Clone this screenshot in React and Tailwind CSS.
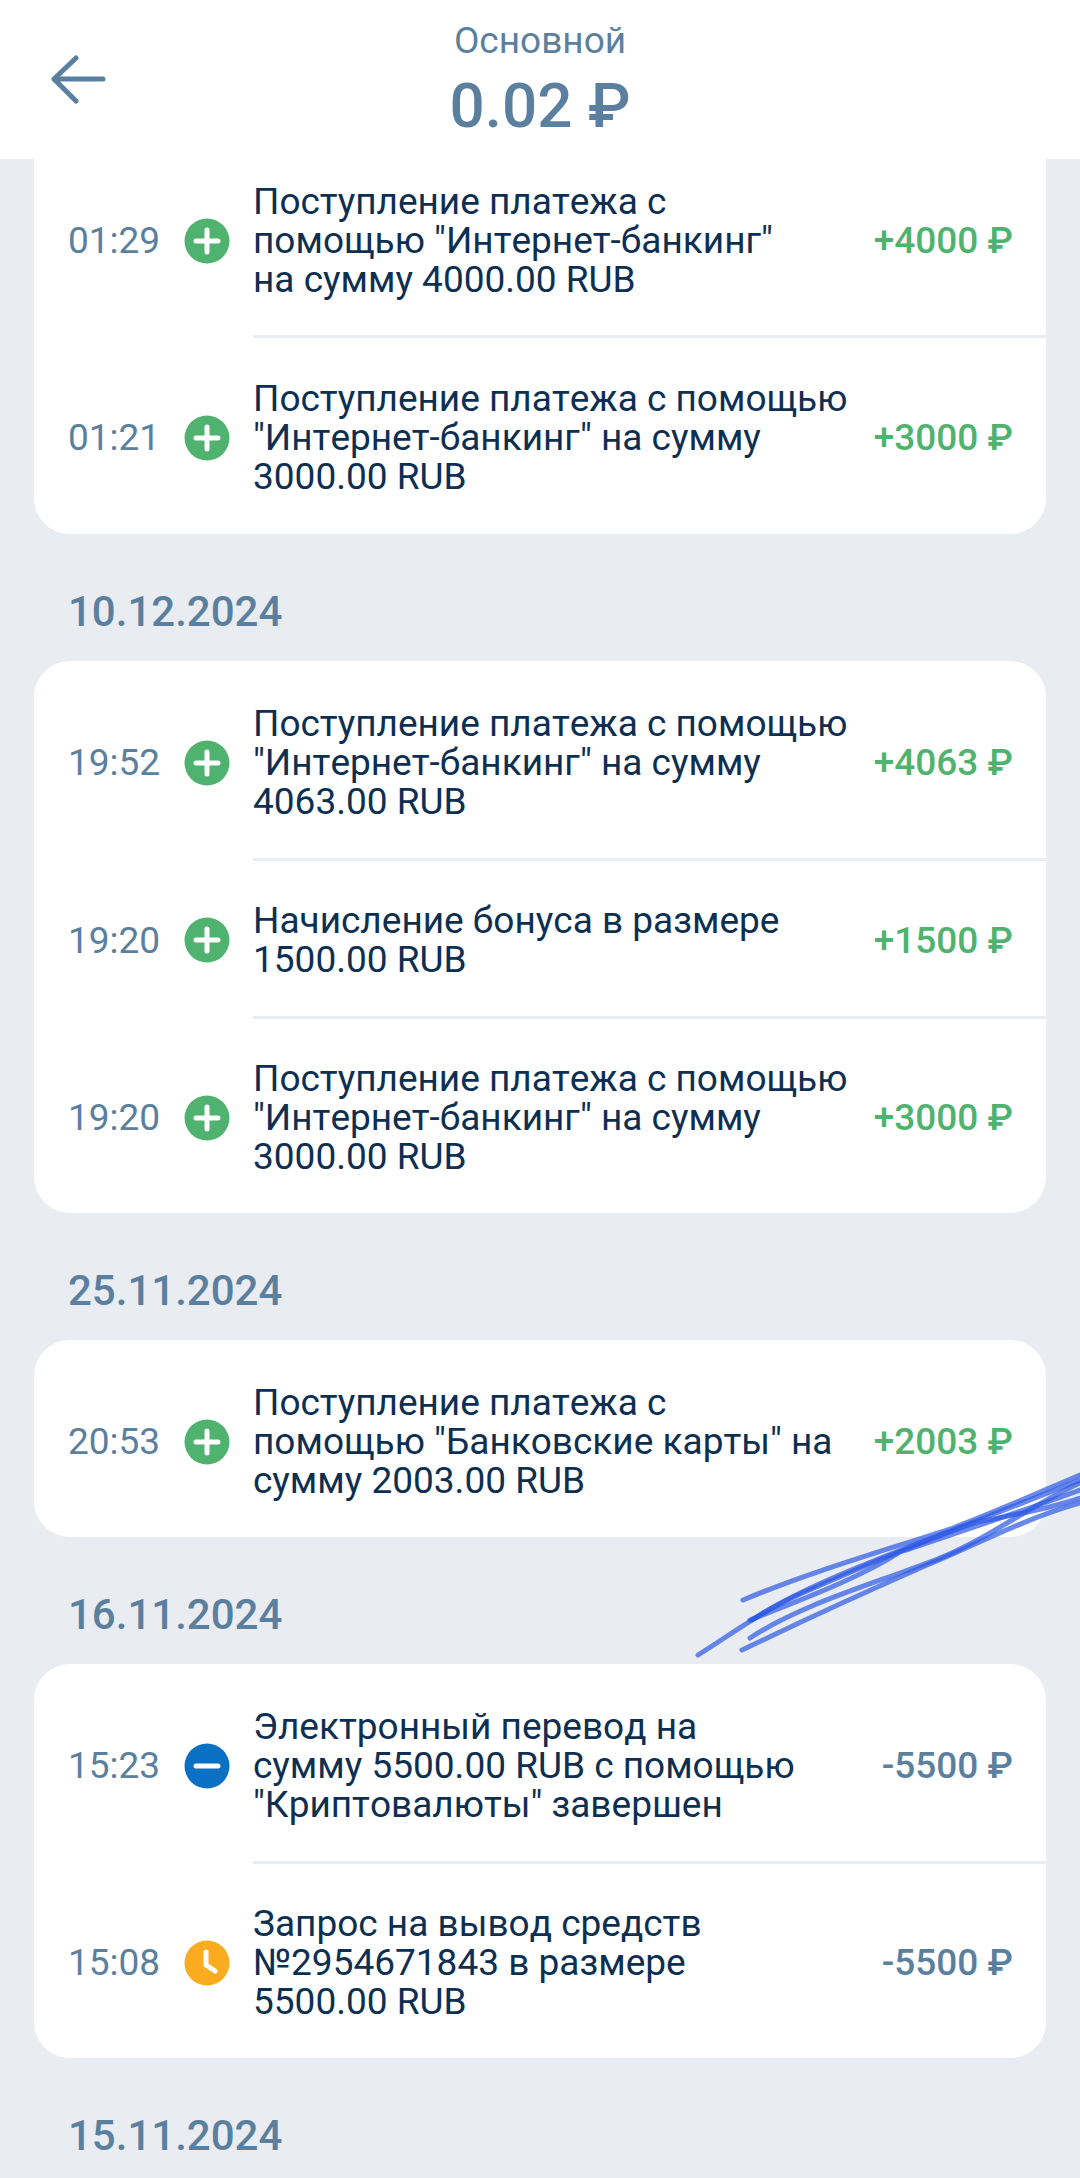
const PLUS = 'plus';
const MINUS = 'minus';
const WAIT = 'wait';

const groups = [
  {
    date: null,
    rows: [
      { time: '01:29', icon: PLUS, amount: '+4000 ₽', lines: ['Поступление платежа с', 'помощью "Интернет-банкинг"', 'на сумму 4000.00 RUB'] },
      { time: '01:21', icon: PLUS, amount: '+3000 ₽', lines: ['Поступление платежа с помощью', '"Интернет-банкинг" на сумму', '3000.00 RUB'] },
    ],
  },
  {
    date: '10.12.2024',
    rows: [
      { time: '19:52', icon: PLUS, amount: '+4063 ₽', lines: ['Поступление платежа с помощью', '"Интернет-банкинг" на сумму', '4063.00 RUB'] },
      { time: '19:20', icon: PLUS, amount: '+1500 ₽', lines: ['Начисление бонуса в размере', '1500.00 RUB'] },
      { time: '19:20', icon: PLUS, amount: '+3000 ₽', lines: ['Поступление платежа с помощью', '"Интернет-банкинг" на сумму', '3000.00 RUB'] },
    ],
  },
  {
    date: '25.11.2024',
    rows: [
      { time: '20:53', icon: PLUS, amount: '+2003 ₽', lines: ['Поступление платежа с', 'помощью "Банковские карты" на', 'сумму 2003.00 RUB'] },
    ],
  },
  {
    date: '16.11.2024',
    rows: [
      { time: '15:23', icon: MINUS, amount: '-5500 ₽', lines: ['Электронный перевод на', 'сумму 5500.00 RUB с помощью', '"Криптовалюты" завершен'] },
      { time: '15:08', icon: WAIT, amount: '-5500 ₽', lines: ['Запрос на вывод средств', '№2954671843 в размере', '5500.00 RUB'] },
    ],
  },
];

function StatusIcon({ type }) {
  const fill = type === PLUS ? '#4fb36f' : type === MINUS ? '#0a70c4' : '#fbab1f';
  return (
    <svg width="46" height="46" viewBox="0 0 46 46" className="shrink-0">
      <circle cx="23" cy="23" r="22.5" fill={fill} />
      {type === PLUS && <path d="M23 12v22M12 23h22" stroke="#fff" strokeWidth="5" strokeLinecap="round" />}
      {type === MINUS && <path d="M12 23h22" stroke="#fff" strokeWidth="5" strokeLinecap="round" />}
      {type === WAIT && <path d="M22 12v13l9 6" stroke="#fff" strokeWidth="5" strokeLinecap="round" strokeLinejoin="round" fill="none" />}
    </svg>
  );
}

function Row({ row, first, cut }) {
  const green = row.icon === PLUS;
  // the first card is scrolled under the header, so its two rows differ a little
  const pad = cut === 0 ? 'pt-[20px] pb-[36px]' : cut === 1 ? 'pt-[41px] pb-[38px]' : 'pt-[40px] pb-[37px]';
  return (
    <div className="flex">
      <div className={`w-[219px] shrink-0 flex items-center pl-[34px] ${cut === 0 ? 'pb-[13px]' : 'pt-[6px]'}`}>
        <span className="w-[116px] text-[37px] leading-none text-[#5b7f9e]">{row.time}</span>
        <StatusIcon type={row.icon} />
      </div>
      <div className={`flex-1 flex items-center justify-between pr-[33px] border-t-[3px] ${pad} ${first ? 'border-transparent' : 'border-[#e9edf2]'}`}>
        <div className="text-[37px] leading-[39px] text-[#0d2f52] whitespace-nowrap [font-kerning:none]">
          {row.lines.map((line) => (
            <div key={line}>{line}</div>
          ))}
        </div>
        <span className={`text-[37px] leading-none font-medium whitespace-nowrap ${green ? 'text-[#4fb36f]' : 'text-[#5b7f9e]'}`}>
          {row.amount}
        </span>
      </div>
    </div>
  );
}

function Scribble() {
  // pen marks over the screenshot
  const strokes = [
    'M743 1600 C810 1572 880 1552 953 1528 C1000 1510 1040 1492 1080 1475',
    'M752 1620 C800 1588 880 1558 953 1530 C1000 1512 1040 1496 1080 1480',
    'M698 1655 C730 1635 760 1612 800 1594 C860 1568 920 1542 977 1522 C1020 1514 1050 1508 1080 1498',
    'M750 1638 C800 1605 870 1585 927 1563 C980 1545 1030 1505 1080 1483',
    'M742 1650 C800 1622 870 1590 927 1565 C970 1548 1020 1520 1080 1503',
    'M750 1620 C800 1600 860 1578 900 1552 C950 1535 1020 1512 1080 1490',
  ];
  return (
    <svg width="1080" height="2178" viewBox="0 0 1080 2178" className="absolute left-0 top-0 pointer-events-none">
      {strokes.map((d) => (
        <path key={d} d={d} fill="none" stroke="#2b57e4" strokeWidth="5" strokeLinecap="round" opacity="0.7" />
      ))}
    </svg>
  );
}

export default function App() {
  return (
    <div className="relative w-[1080px] h-[2178px] overflow-hidden bg-[#e9edf2] font-['Roboto',sans-serif]">
      <header className="h-[159px] bg-white grid grid-cols-[1fr_auto_1fr] text-[#5b7f9e]">
        <div className="pl-[50px] pt-[55px]">
          <svg width="56" height="50" viewBox="0 0 56 50" fill="none" stroke="#5b7f9e" strokeWidth="5" strokeLinecap="round" strokeLinejoin="round">
            <path d="M53 24H4M26 3 4 24l22 22" />
          </svg>
        </div>
        <div className="flex flex-col items-center pt-[19px]">
          <span className="text-[37px] leading-[43px]">Основной</span>
          <span className="text-[62px] leading-[72px] mt-[8px] font-medium">0.02 ₽</span>
        </div>
        <div />
      </header>

      <main className="px-[34px]">
        {groups.map((group) => (
          <section key={group.date || 'top'}>
            {group.date && (
              <h2 className="h-[127px] pl-[34px] pt-[53px] text-[42px] leading-[50px] font-medium text-[#5b7f9e]">{group.date}</h2>
            )}
            <div className={`bg-white rounded-b-[36px] ${group.date ? 'rounded-t-[36px]' : ''}`}>
              {group.rows.map((row, i) => (
                <Row key={row.time + i} row={row} first={i === 0} cut={group.date ? null : i} />
              ))}
            </div>
          </section>
        ))}
        <h2 className="h-[127px] pl-[34px] pt-[53px] text-[42px] leading-[50px] font-medium text-[#5b7f9e]">15.11.2024</h2>
      </main>

      <Scribble />
    </div>
  );
}
